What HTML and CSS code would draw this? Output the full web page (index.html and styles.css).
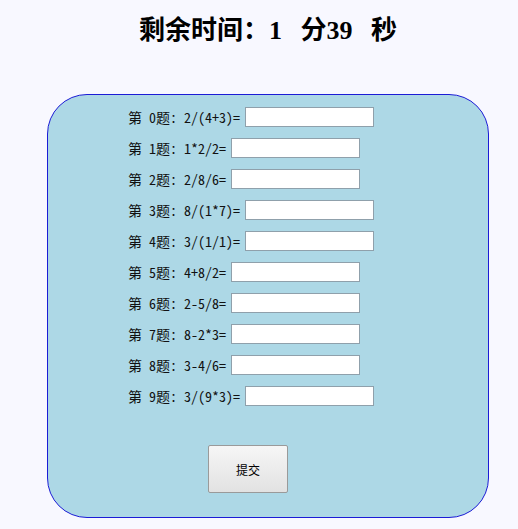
FILE: index.html
```
<!doctype html>
<html lang="zh-cn">
<head>
	<meta charset="utf-8">
	<title>Document</title>
	<link rel="stylesheet" href="styles.css">
</head>
<body>
<div class="wrap">
	<h1 class="time">剩余时间：1 分39 秒</h1>

	<div class="box">
		<form class="quiz">
			<div class="row"><span>第 0题: 2/(4+3)=</span><input type="text"></div>
			<div class="row"><span>第 1题: 1*2/2=</span><input type="text"></div>
			<div class="row"><span>第 2题: 2/8/6=</span><input type="text"></div>
			<div class="row"><span>第 3题: 8/(1*7)=</span><input type="text"></div>
			<div class="row"><span>第 4题: 3/(1/1)=</span><input type="text"></div>
			<div class="row"><span>第 5题: 4+8/2=</span><input type="text"></div>
			<div class="row"><span>第 6题: 2-5/8=</span><input type="text"></div>
			<div class="row"><span>第 7题: 8-2*3=</span><input type="text"></div>
			<div class="row"><span>第 8题: 3-4/6=</span><input type="text"></div>
			<div class="row"><span>第 9题: 3/(9*3)=</span><input type="text"></div>
			<div class="btnRow"><button type="button" class="submit">提交</button></div>
		</form>
	</div>
</div>
</body>
</html>
```

FILE: styles.css
```
*{ padding: 0; margin: 0; box-sizing: border-box }
body{ background: #f8f8ff; }
.wrap{ width: 500px; margin-left: 18px; }
.time{ text-align: center; font-family: "Liberation Serif", "Noto Sans CJK SC", serif; font-size: 26px; font-weight: bold; word-spacing: 12px; height: 62px; line-height: 62px; color: #000; }
.box{ width: 442px; height: 424px; margin: 32px auto 0; background: #add8e6; border: 1px solid #1c1cd6; border-radius: 40px; padding: 6px 0 0 80px; }
.row{ display: flex; align-items: center; height: 31px; font-family: "Noto Sans Mono CJK SC", "Liberation Mono", "Noto Sans CJK SC", monospace; font-size: 14px; color: #111; white-space: pre; }
.row input{ width: 129px; height: 20px; margin-left: 5px; border: 1px solid #8fa0ab; background: #fff; }
.btnRow{ padding: 34px 0 0 80px; }
.submit{ width: 80px; height: 48px; border: 1px solid #9a9a9a; border-radius: 2px; background: linear-gradient(#f6f6f6, #e2e2e2); font-family: "Noto Sans CJK SC", sans-serif; font-size: 12px; color: #000; }
```
